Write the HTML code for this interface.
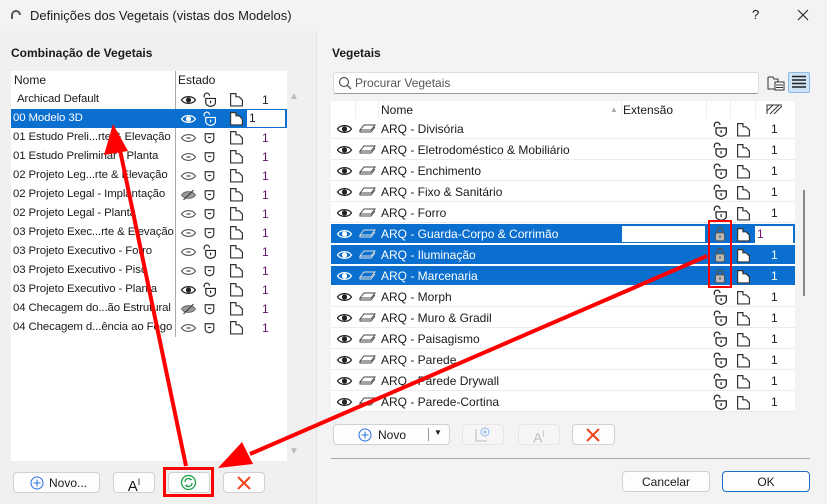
<!DOCTYPE html><html><head><meta charset="utf-8"><style>
*{box-sizing:border-box;margin:0;padding:0}
body{width:827px;height:504px;overflow:hidden;background:#f0f0f0;font-family:"Liberation Sans",sans-serif;font-size:12px;color:#1a1a1a;position:relative}
.a{position:absolute}
.t{white-space:nowrap}
.btn{position:absolute;background:#fdfdfd;border:1px solid #d0d0d0;border-radius:4px;height:21px;text-align:center;line-height:19px;font-size:12px}
.row{position:absolute;left:0;width:100%;height:19px}
.sel{background:#0a6fcf;color:#fff}
svg{position:absolute}
</style></head><body>
<svg width="0" height="0" style="position:absolute"><defs>
<symbol id="eye" viewBox="0 0 16 12"><path d="M1 6C4 1.5 12 1.5 15 6C12 10.5 4 10.5 1 6Z" fill="none" stroke="currentColor" stroke-width="1.2"/><circle cx="8" cy="6" r="2.6" fill="currentColor"/></symbol>
<symbol id="eyeh" viewBox="0 0 16 12"><path d="M1 6C4 1.5 12 1.5 15 6C12 10.5 4 10.5 1 6Z" fill="#fff" stroke="#444" stroke-width="1.1"/><path d="M6 6h4" stroke="#444" stroke-width="1.2"/></symbol>
<symbol id="eyex" viewBox="0 0 16 12"><path d="M1 6C4 1.5 12 1.5 15 6C12 10.5 4 10.5 1 6Z" fill="#999" stroke="#666" stroke-width="1"/><path d="M3 11L13 1" stroke="#444" stroke-width="1.2"/></symbol>
<symbol id="lo" viewBox="0 0 14 14"><path d="M2 5V3.5A2.5 2.5 0 0 1 7 3.5" fill="none" stroke="currentColor" stroke-width="1.1"/><path d="M3.5 6h9v4c0 2-2 3-4.5 3.5C6 13 3.5 12 3.5 10Z" fill="none" stroke="currentColor" stroke-width="1.1"/><path d="M8 8v2.5" stroke="currentColor" stroke-width="1.1"/></symbol>
<symbol id="sh" viewBox="0 0 14 14"><path d="M3 3.5h8v5c0 2-2 3-4 3.5C5 11.5 3 10.5 3 8.5Z" fill="#fff" stroke="#333" stroke-width="1.1"/><path d="M5.5 7h3" stroke="#333" stroke-width="1.1"/></symbol>
<symbol id="lk" viewBox="0 0 14 14"><path d="M4.5 6V4a2.5 2.5 0 0 1 5 0v2" fill="none" stroke="#555" stroke-width="1.3"/><rect x="3" y="6" width="8" height="7" rx="2" fill="#bbb" stroke="#555"/><path d="M7 8v2.5" stroke="#555"/></symbol>
<symbol id="fd" viewBox="0 0 14 14"><path d="M1.5 1.5h5v3h3l3 3v5.5h-11Z" fill="#fff" stroke="#333" stroke-width="1.1"/><path d="M6.5 1.5l0 3" stroke="#333"/></symbol>
<symbol id="ly" viewBox="0 0 18 12"><path d="M5 2h11l-4 5H1Z M1 7v2h11l4-5" fill="none" stroke="currentColor" stroke-width="1"/></symbol>
</defs></svg>
<div class="a" style="left:0;top:0;width:827px;height:31px;background:#f3f3f3"></div>
<svg style="left:10px;top:9px" width="12" height="12" viewBox="0 0 12 12"><path d="M2 10V6a4 4 0 0 1 8 0" fill="none" stroke="#555" stroke-width="2"/></svg>
<div class="a t" style="left:30px;top:8px;font-size:13px">Definições dos Vegetais (vistas dos Modelos)</div>
<div class="a t" style="left:752px;top:7px;font-size:13px">?</div>
<svg style="left:797px;top:9px" width="12" height="12" viewBox="0 0 12 12"><path d="M1 1L11 11M11 1L1 11" stroke="#222" stroke-width="1.1"/></svg>
<div class="a" style="left:316px;top:31px;width:511px;height:473px;background:#f3f3f3;border-left:1px solid #e4e4e4"></div>
<div class="a t" style="left:11px;top:46px;font-weight:bold">Combinação de Vegetais</div>
<div class="a t" style="left:332px;top:46px;font-weight:bold">Vegetais</div>
<div class="a" style="left:11px;top:71px;width:276px;height:390px;background:#fff">
<div class="a t" style="left:3px;top:2px">Nome</div><div class="a t" style="left:167px;top:2px">Estado</div>
<div class="a" style="left:164px;top:0;width:1px;height:266px;background:#aaa"></div>
</div>
<div class="a t" style="left:289px;top:91px;color:#bbb;font-size:10px">▲</div>
<div class="a t" style="left:289px;top:446px;color:#bbb;font-size:10px">▼</div>
<div id="L" class="a" style="left:11px;top:90px;width:276px"></div>
<div class="a" style="left:333px;top:72px;width:426px;height:22px;background:#fff;border:1px solid #ddd;border-bottom:1px solid #999;border-radius:3px"></div>
<svg style="left:338px;top:76px" width="14" height="14" viewBox="0 0 14 14"><circle cx="6" cy="6" r="4.5" fill="none" stroke="#555" stroke-width="1.2"/><path d="M9.5 9.5L13 13" stroke="#555" stroke-width="1.3"/></svg>
<div class="a t" style="left:355px;top:76px;color:#555">Procurar Vegetais</div>
<svg style="left:767px;top:75px" width="18" height="16" viewBox="0 0 18 16"><path d="M1 2h5l1 2h4v3M1 2v12h8" fill="none" stroke="#333"/><rect x="8" y="7" width="9" height="8" fill="#fff" stroke="#333"/><path d="M9 10h7M9 12.5h7" stroke="#333"/></svg>
<div class="a" style="left:788px;top:72px;width:22px;height:21px;background:#cfe3f7;border:1px solid #8ab9e8;border-radius:2px"></div>
<svg style="left:791px;top:75px" width="16" height="14" viewBox="0 0 16 14"><path d="M1 1.5h14M1 5h14M1 8.5h14M1 12h14" stroke="#222" stroke-width="1.6"/></svg>
<div class="a" style="left:331px;top:101px;width:464px;height:311px;background:#fff"></div>
<div class="a" style="left:331px;top:101px;width:464px;height:18px;background:#fff">
<div class="a t" style="left:50px;top:2px">Nome</div><div class="a t" style="left:292px;top:2px">Extensão</div>
<div class="a t" style="left:279px;top:4px;color:#aaa;font-size:8px">▲</div>
<div class="a" style="left:24px;top:0;width:1px;height:18px;background:#eee"></div><div class="a" style="left:47px;top:0;width:1px;height:18px;background:#eee"></div><div class="a" style="left:290px;top:0;width:1px;height:18px;background:#eee"></div><div class="a" style="left:375px;top:0;width:1px;height:18px;background:#eee"></div><div class="a" style="left:399px;top:0;width:1px;height:18px;background:#eee"></div><div class="a" style="left:424px;top:0;width:1px;height:18px;background:#eee"></div>
<svg style="left:435px;top:2px" width="17" height="12" viewBox="0 0 17 12"><path d="M1 11V2h15M1 8l6-6M4 11l9-9M8 11l8-8" fill="none" stroke="#333"/></svg>
</div>
<div id="R" class="a" style="left:331px;top:119px;width:464px"></div>
<div class="a" style="left:803px;top:190px;width:2px;height:106px;background:#888"></div>
<div class="btn" style="left:333px;top:424px;width:117px"></div>
<svg style="left:358px;top:428px" width="14" height="14" viewBox="0 0 14 14"><circle cx="7" cy="7" r="6" fill="none" stroke="#2a6fe0"/><path d="M7 3.5v7M3.5 7h7" stroke="#2a6fe0"/></svg>
<div class="a t" style="left:378px;top:428px">Novo</div>
<div class="a" style="left:428px;top:428px;width:1px;height:13px;background:#999"></div>
<div class="a t" style="left:434px;top:428px;font-size:8px">▼</div>
<div class="btn" style="left:462px;top:424px;width:42px;background:#f6f6f6;border-color:#e6e6e6"></div>
<svg style="left:475px;top:427px" width="16" height="15" viewBox="0 0 16 15"><path d="M1 2v12h11" fill="none" stroke="#bbb"/><circle cx="10" cy="5" r="4" fill="none" stroke="#8fb4ef"/><path d="M10 3v4M8 5h4" stroke="#8fb4ef"/></svg>
<div class="btn" style="left:518px;top:424px;width:42px;background:#f6f6f6;border-color:#e6e6e6;color:#bbb;font-size:14px">A<sup style="font-size:9px">I</sup></div>
<div class="btn" style="left:572px;top:424px;width:43px"></div>
<svg style="left:586px;top:428px" width="14" height="14" viewBox="0 0 14 14"><path d="M1 1L13 13M13 1L1 13" stroke="#f0441c" stroke-width="2"/></svg>
<div class="a" style="left:331px;top:458px;width:479px;height:1px;background:#a8a8a8"></div>
<div class="btn" style="left:622px;top:471px;width:88px;line-height:20px">Cancelar</div>
<div class="btn" style="left:722px;top:471px;width:88px;line-height:20px;border-color:#1f6fc8">OK</div>
<div class="btn" style="left:13px;top:472px;width:87px"></div>
<svg style="left:30px;top:476px" width="14" height="14" viewBox="0 0 14 14"><circle cx="7" cy="7" r="6" fill="none" stroke="#2a6fe0"/><path d="M7 3.5v7M3.5 7h7" stroke="#2a6fe0"/></svg>
<div class="a t" style="left:49px;top:476px">Novo...</div>
<div class="btn" style="left:113px;top:472px;width:42px;font-size:15px">A<sup style="font-size:9px">I</sup></div>
<div class="btn" style="left:168px;top:472px;width:42px"></div>
<svg style="left:180px;top:474px" width="17" height="17" viewBox="0 0 17 17"><circle cx="8.5" cy="8.5" r="7" fill="none" stroke="#1da04a" stroke-width="1.3"/><path d="M5 8a3.5 3.5 0 0 1 6-2.5l-1.5.3M12 9a3.5 3.5 0 0 1-6 2.5l1.5-.3" fill="none" stroke="#1da04a" stroke-width="1.3"/></svg>
<div class="btn" style="left:223px;top:472px;width:42px"></div>
<svg style="left:237px;top:476px" width="14" height="14" viewBox="0 0 14 14"><path d="M1 1L13 13M13 1L1 13" stroke="#f0441c" stroke-width="2"/></svg>
<div class="a" style="left:163px;top:467px;width:51px;height:30px;border:3px solid #f00"></div>
<div class="a" style="left:708px;top:220px;width:24px;height:68px;border:2px solid #f00"></div>
<svg style="left:0;top:0" width="827" height="504"><g stroke="#f00" stroke-width="4" fill="#f00"><line x1="186" y1="466" x2="120" y2="150"/><polygon points="113,124 104,155 128,151" stroke="none"/><line x1="707" y1="256" x2="250" y2="454"/><polygon points="218,468 242,442 253,464" stroke="none"/></g></svg>
<script>
var L=[["Archicad Default","e","o",1],["00 Modelo 3D","e","o",2],["01 Estudo Preli...rte & Elevação","h","s"],["01 Estudo Preliminar - Planta","h","s"],["02 Projeto Leg...rte & Elevação","h","s"],["02 Projeto Legal - Implantação","x","s"],["02 Projeto Legal - Planta","h","s"],["03 Projeto Exec...rte & Elevação","h","s"],["03 Projeto Executivo - Forro","h","o"],["03 Projeto Executivo - Piso","h","s"],["03 Projeto Executivo - Planta","e","o"],["04 Checagem do...ão Estrutural","x","s"],["04 Checagem d...ência ao Fogo","h","s"]];
var h="";L.forEach(function(r,i){var s=r[3]==2,t=i*19,c=s?"#fff":"#222";
h+='<div class="row'+(s?' sel':'')+'" style="top:'+t+'px"><div class="a t" style="left:'+(i==0?6:2)+'px;top:3px;width:162px;overflow:hidden;font-size:11.4px;letter-spacing:-0.1px">'+r[0]+'</div>'+
'<div class="a" style="left:164px;top:0;width:1px;height:19px;background:'+(s?'#0a6fcf':'#aaa')+'"></div>'+
'<svg style="left:169px;top:4px;color:'+c+'" width="17" height="12"><use href="#'+(r[1]=="e"?"eye":r[1]=="h"?"eyeh":"eyex")+'"/></svg>'+
'<svg style="left:191px;top:2px;color:'+c+'" width="15" height="15"><use href="#'+(r[2]=="o"?"lo":"sh")+'"/></svg>'+
'<svg style="left:218px;top:2px" width="15" height="15"><use href="#fd"/></svg>'+
(s?'<div class="a" style="left:236px;top:1px;width:38px;height:17px;background:#fff;color:#222;padding-left:2px;line-height:17px">1</div>':'<div class="a" style="left:251px;top:3px;color:'+(i==0?"#222":"#6a1070")+'">1</div>')+'</div>';});
document.getElementById("L").innerHTML=h;
var R=["Divisória","Eletrodoméstico & Mobiliário","Enchimento","Fixo & Sanitário","Forro","Guarda-Corpo & Corrimão","Iluminação","Marcenaria","Morph","Muro & Gradil","Paisagismo","Parede","Parede Drywall","Parede-Cortina"];
h="";R.forEach(function(n,i){var s=i>=5&&i<=7,t=i*21,c=s?"#fff":"#222";
h+='<div class="row'+(s?' sel':'')+'" style="top:'+t+'px;height:20px;border-bottom:1px solid '+(s?'#fff':'#ececec')+'"><svg style="left:5px;top:4px;color:'+c+'" width="17" height="12"><use href="#eye"/></svg>'+
'<svg style="left:28px;top:4px;color:'+(s?'#ddd':'#444')+'" width="18" height="12"><use href="#ly"/></svg>'+
'<div class="a t" style="left:50px;top:3px">ARQ - '+n+'</div>'+
(i==5?'<div class="a" style="left:291px;top:2px;width:83px;height:16px;background:#fff"></div>':'')+
'<svg style="left:381px;top:2px;color:#222" width="16" height="16"><use href="#'+(s?"lk":"lo")+'"/></svg>'+
'<svg style="left:405px;top:3px" width="15" height="15"><use href="#fd"/></svg>'+
(i==5?'<div class="a" style="left:424px;top:2px;width:38px;height:17px;background:#fff;color:#6a1070;padding-left:2px;line-height:17px">1</div>':'<div class="a" style="left:440px;top:3px">1</div>')+'</div>';});
document.getElementById("R").innerHTML=h;
</script>
</body></html>
